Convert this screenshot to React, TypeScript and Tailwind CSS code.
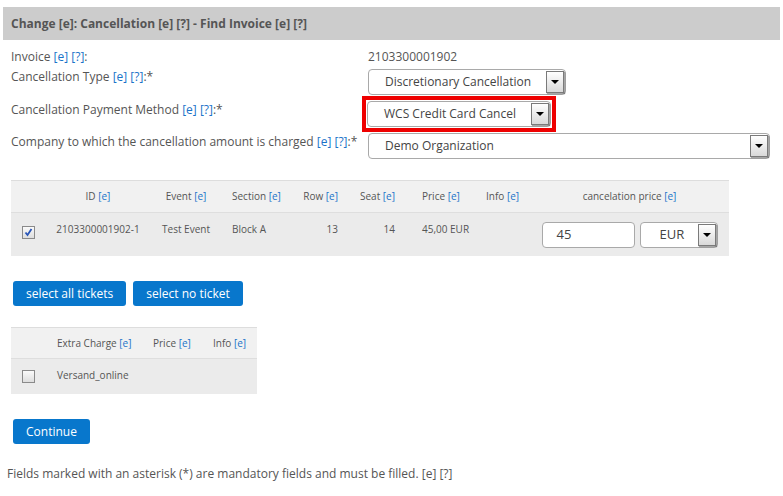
import React from "react";

const L = () => <span className="text-[#1a73c9]">[e]</span>;
const Q = () => <span className="text-[#1a73c9]">[?]</span>;

function Arrow() {
  return (
    <div className="h-[22px] w-[18px] border border-[#7a7a7a] bg-gradient-to-b from-white to-[#d9d9d9] shadow-[1px_1px_1px_rgba(0,0,0,0.35)] flex items-center justify-center">
      <div className="w-0 h-0 border-l-[4px] border-r-[4px] border-t-[4px] border-l-transparent border-r-transparent border-t-black" />
    </div>
  );
}

function Select({ value, className }: { value: string; className: string }) {
  return (
    <div className={`h-[26px] border border-[#a9a9a9] rounded-[4px] bg-white flex items-center justify-between pl-4 pr-[1px] text-[12px] ${className}`}>
      <span className="text-[#444]">{value}</span>
      <Arrow />
    </div>
  );
}

function Check({ checked }: { checked?: boolean }) {
  return (
    <div className="w-[13px] h-[13px] border border-[#8a8a8a] bg-gradient-to-b from-[#fafafa] to-[#dedede] flex items-center justify-center">
      {checked && (
        <svg width="9" height="9" viewBox="0 0 9 9">
          <path d="M1.5 4.5 L3.5 7 L7.5 1" stroke="#2a56b8" strokeWidth="1.8" fill="none" />
        </svg>
      )}
    </div>
  );
}

function Btn({ children }: { children: React.ReactNode }) {
  return (
    <div className="h-[25px] px-[13px] rounded-[3px] bg-[#0877cc] text-white text-[12px] flex items-center">
      {children}
    </div>
  );
}

export default function App() {
  const cols1 = "grid grid-cols-[35px_104px_72px_70px_56px_57px_71px_54px_199px]";
  const cols2 = "grid grid-cols-[35px_96px_60px_55px]";
  return (
    <div className="w-[783px] h-[496px] bg-white text-[#555] pt-[7px] font-['Open_Sans',sans-serif]">
      <div className="mx-[3px] h-[33px] bg-[#cccccc] flex items-center pl-2 text-[12px] font-bold text-[#555]">
        Change [e]: Cancellation [e] [?] - Find Invoice [e] [?]
      </div>

      <div className="px-[11px] mt-[8px] text-[12px] grid grid-cols-[357px_1fr] items-start">
        <div className="leading-[18px]">Invoice <L /> <Q />:</div>
        <div className="leading-[18px]">2103300001902</div>

        <div className="leading-[18px] mt-[2px]">Cancellation Type <L /> <Q />:*</div>
        <Select value="Discretionary Cancellation" className="w-[198px] mt-[3px]" />

        <div className="leading-[18px] mt-[6px]">Cancellation Payment Method <L /> <Q />:*</div>
        <div className="w-[194px] -ml-[6px] mt-[1px] border-[4px] border-[#ee0000] p-[1px]">
          <Select value="WCS Credit Card Cancel" className="w-[184px]" />
        </div>

        <div className="leading-[18px] mt-[1px]">Company to which the cancellation amount is charged <L /> <Q />:*</div>
        <Select value="Demo Organization" className="w-[402px] mt-[1px]" />
      </div>

      <div className="mx-[11px] mt-[21px] w-[718px] text-[10px]">
        <div className={`${cols1} h-[33px] bg-[#f1f1f1] border-t border-[#dddddd] border-b border-b-[#dedede] items-center`}>
          <div />
          <div className="text-center">ID <L /></div>
          <div className="text-center">Event <L /></div>
          <div className="pl-[10px]">Section <L /></div>
          <div className="text-right pr-[10px]">Row <L /></div>
          <div className="text-right pr-[10px]">Seat <L /></div>
          <div className="pl-[17px]">Price <L /></div>
          <div className="pl-[10px]">Info <L /></div>
          <div className="text-center">cancelation price <L /></div>
        </div>
        <div className={`${cols1} h-[43px] bg-[#ebebeb] items-start`}>
          <div className="pl-[11px] pt-[13px]"><Check checked /></div>
          <div className="text-center pt-[9px]">2103300001902-1</div>
          <div className="text-center pt-[9px]">Test Event</div>
          <div className="pl-[10px] pt-[9px]">Block A</div>
          <div className="text-right pr-[10px] pt-[9px]">13</div>
          <div className="text-right pr-[10px] pt-[9px]">14</div>
          <div className="pl-[17px] pt-[9px]">45,00 EUR</div>
          <div />
          <div className="flex gap-[5px] justify-center pt-[9px]">
            <div className="w-[93px] h-[26px] border border-[#a9a9a9] rounded-[4px] bg-white pl-[14px] flex items-center text-[13px] text-[#444]">45</div>
            <Select value="EUR" className="w-[78px] !text-[13px] !pl-[19px]" />
          </div>
        </div>
      </div>

      <div className="mx-[13px] mt-[25px] flex gap-[7px]">
        <Btn>select all tickets</Btn>
        <Btn>select no ticket</Btn>
      </div>

      <div className="mx-[11px] mt-[21px] w-[246px] text-[10px]">
        <div className={`${cols2} h-[32px] bg-[#f1f1f1] border-t border-[#dddddd] border-b border-b-[#dedede] items-center`}>
          <div />
          <div className="pl-[11px]">Extra Charge <L /></div>
          <div className="pl-[11px]">Price <L /></div>
          <div className="pl-[11px]">Info <L /></div>
        </div>
        <div className={`${cols2} h-[35px] bg-[#ebebeb] items-start`}>
          <div className="pl-[11px] pt-[11px]"><Check /></div>
          <div className="pl-[11px] pt-[9px]">Versand_online</div>
          <div />
          <div />
        </div>
      </div>

      <div className="mx-[13px] mt-[25px] flex">
        <Btn>Continue</Btn>
      </div>

      <div className="px-[7px] mt-[21px] text-[12px]">
        Fields marked with an asterisk (*) are mandatory fields and must be filled. [e] [?]
      </div>
    </div>
  );
}
